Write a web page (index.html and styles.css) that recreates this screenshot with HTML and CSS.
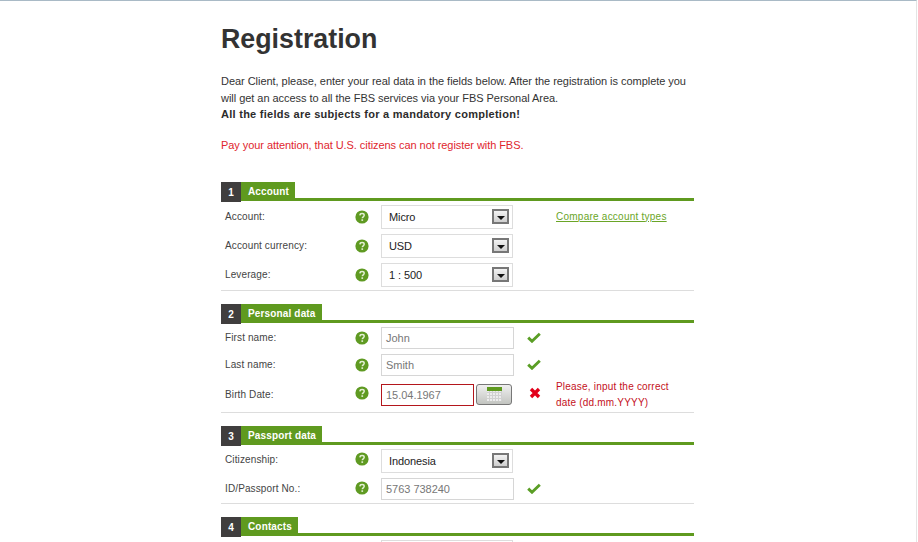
FILE: index.html
```html
<!DOCTYPE html>
<html lang="en">
<head>
<meta charset="utf-8">
<title>Registration</title>
<link rel="stylesheet" href="styles.css">
</head>
<body>
<svg class="sprites" width="0" height="0" aria-hidden="true">
  <symbol id="help" viewBox="0 0 14 14">
    <circle cx="7" cy="7" r="6.6" fill="#5f9a22"/>
    <path d="M4.9 5.4C5 4.2 5.9 3.6 7.1 3.6c1.3 0 2.1.7 2.1 1.7 0 1.5-1.9 1.6-1.9 3" fill="none" stroke="#e4efd4" stroke-width="1.5"/>
    <rect x="6.4" y="9.3" width="1.7" height="1.6" fill="#e4efd4"/>
  </symbol>
  <symbol id="ok" viewBox="0 0 14 11">
    <path d="M1.2 5.6l3.8 3.6 7.8-7.4" fill="none" stroke="#5a9e25" stroke-width="2.9"/>
  </symbol>
  <symbol id="bad" viewBox="0 0 12 12">
    <path d="M2 2l8 8M10 2l-8 8" fill="none" stroke="#e2001a" stroke-width="3.4"/>
  </symbol>
</svg>
<main class="page">
  <h1 class="title">Registration</h1>
  <p class="intro">Dear Client, please, enter your real data in the fields below. After the registration is complete you will get an access to all the FBS services via your FBS Personal Area.<br><strong class="intro-strong">All the fields are subjects for a mandatory completion!</strong></p>
  <p class="warning">Pay your attention, that U.S. citizens can not register with FBS.</p>

  <section class="group">
    <header class="group-head"><span class="group-num">1</span><h2 class="group-name">Account</h2><span class="group-rule"></span></header>
    <div class="rows rows-account">
      <div class="row">
        <span class="label">Account:</span><svg class="help"><use href="#help"/></svg>
        <div class="select"><span>Micro</span><span class="arrow"></span></div><span></span>
        <a class="link" href="#">Compare account types</a>
      </div>
      <div class="row">
        <span class="label">Account currency:</span><svg class="help"><use href="#help"/></svg>
        <div class="select"><span>USD</span><span class="arrow"></span></div>
      </div>
      <div class="row">
        <span class="label">Leverage:</span><svg class="help"><use href="#help"/></svg>
        <div class="select"><span>1 : 500</span><span class="arrow"></span></div>
      </div>
    </div>
  </section>

  <section class="group">
    <header class="group-head"><span class="group-num">2</span><h2 class="group-name">Personal data</h2><span class="group-rule"></span></header>
    <div class="rows rows-personal">
      <div class="row">
        <span class="label">First name:</span><svg class="help"><use href="#help"/></svg>
        <div class="input">John</div><svg class="ok"><use href="#ok"/></svg>
      </div>
      <div class="row">
        <span class="label">Last name:</span><svg class="help"><use href="#help"/></svg>
        <div class="input">Smith</div><svg class="ok"><use href="#ok"/></svg>
      </div>
      <div class="row row-tall">
        <span class="label">Birth Date:</span><svg class="help help-up"><use href="#help"/></svg>
        <div class="date">
          <div class="input input-error">15.04.1967</div>
          <button class="cal" type="button" aria-label="Calendar"><span class="cal-icon"></span></button>
        </div>
        <svg class="bad"><use href="#bad"/></svg>
        <span class="message">Please, input the correct date (dd.mm.YYYY)</span>
      </div>
    </div>
  </section>

  <section class="group">
    <header class="group-head"><span class="group-num">3</span><h2 class="group-name">Passport data</h2><span class="group-rule"></span></header>
    <div class="rows rows-passport">
      <div class="row">
        <span class="label label-up">Citizenship:</span><svg class="help help-up"><use href="#help"/></svg>
        <div class="select"><span>Indonesia</span><span class="arrow"></span></div>
      </div>
      <div class="row">
        <span class="label">ID/Passport No.:</span><svg class="help help-up-small"><use href="#help"/></svg>
        <div class="input">5763 738240</div><svg class="ok"><use href="#ok"/></svg>
      </div>
    </div>
  </section>

  <section class="group">
    <header class="group-head"><span class="group-num">4</span><h2 class="group-name">Contacts</h2><span class="group-rule"></span></header>
    <div class="rows">
      <div class="row"><span></span><span></span><div class="select"></div></div>
    </div>
  </section>
</main>
</body>
</html>
```
FILE: styles.css
```css
html, body {
  margin: 0;
  height: 542px;
  overflow: hidden;
  background: #fff;
}
body {
  box-sizing: border-box;
  width: 917px;
  border-top: 1px solid #a9bac6;
  border-right: 1px solid #e4e4e4;
  font-family: "Liberation Sans", Arial, sans-serif;
  color: #333;
}
.sprites { display: block; }
.page {
  width: 473px;
  margin-left: 221px;
}
.title {
  margin: 0;
  padding-top: 21px;
  font-size: 26.8px;
  line-height: 35px;
  font-weight: bold;
  color: #333;
}
.intro {
  margin: 16px 0 0;
  width: 470px;
  font-size: 11px;
  line-height: 16.5px;
  letter-spacing: -0.04px;
  color: #333;
}
.intro-strong { letter-spacing: 0.27px; color: #2c2c2c; }
.warning {
  margin: 14px 0 0;
  font-size: 11px;
  line-height: 16px;
  letter-spacing: -0.06px;
  color: #e0262e;
}
.group { margin-top: 13px; }
.warning + .group { margin-top: 29px; }
.group-head {
  display: flex;
  height: 20px;
}
.group-num {
  width: 20px;
  background: #403e3e;
  color: #fff;
  font-size: 10px;
  font-weight: bold;
  line-height: 22px;
  text-align: center;
}
.group-name {
  margin: 0;
  height: 19px;
  padding: 0 6px 0 7px;
  background: #5f9a1f;
  color: #fff;
  font-size: 10px;
  font-weight: bold;
  line-height: 20px;
  letter-spacing: 0.15px;
}
.group-rule {
  flex: 1;
  height: 16px;
  border-bottom: 3px solid #5f9a1f;
}
.rows {
  display: flex;
  flex-direction: column;
  gap: 5px;
  padding-top: 3px;
  border-bottom: 1px solid #ddd;
}
.rows-account { padding-bottom: 3px; }
.rows-personal { padding-bottom: 1px; }
.rows-passport { padding-bottom: 3px; }
.row {
  display: grid;
  grid-template-columns: 134px 26px 146px 29px 1fr;
  align-items: center;
}
.row-tall { margin-top: -2px; }
.label {
  padding-left: 4px;
  margin-bottom: 1px;
  font-size: 10px;
  letter-spacing: 0.12px;
  color: #444;
}
.label-up { margin-bottom: 3px; }
.help { width: 14px; height: 14px; }
.help-up { margin-bottom: 4px; }
.help-up-small { margin-bottom: 2px; }
.select {
  box-sizing: border-box;
  display: flex;
  align-items: center;
  justify-content: space-between;
  width: 132px;
  height: 24px;
  padding: 0 3px 0 7px;
  border: 1px solid #ddd;
  font-size: 11px;
  letter-spacing: -0.1px;
  color: #222;
}
.arrow {
  box-sizing: border-box;
  display: flex;
  align-items: flex-end;
  justify-content: center;
  width: 17px;
  height: 15px;
  padding-bottom: 2px;
  border: 2px solid #777;
  background: linear-gradient(#f2f2f2, #cfcfcf);
}
.arrow::after {
  content: "";
  border: 4px solid transparent;
  border-top-color: #111;
  border-bottom-width: 0;
}
.input {
  box-sizing: border-box;
  width: 133px;
  height: 22px;
  padding-left: 4px;
  border: 1px solid #d6d6d6;
  font-size: 11px;
  line-height: 20px;
  letter-spacing: -0.03px;
  color: #777;
}
.date { display: flex; gap: 2px; }
.input-error {
  width: 93px;
  border-color: #b4161c;
}
.cal {
  display: flex;
  align-items: center;
  justify-content: center;
  width: 36px;
  height: 21px;
  padding: 0;
  border: 1px solid #777;
  border-radius: 3px;
  background: linear-gradient(#f0f0f0, #c2c4c0);
}
.cal-icon {
  width: 15px;
  height: 14px;
  background:
    linear-gradient(#5f9a1f, #5f9a1f) top / 100% 4px no-repeat,
    repeating-linear-gradient(90deg, transparent 0 2px, #d0d0d0 2px 3px),
    repeating-linear-gradient(#ececec 0 2px, #d0d0d0 2px 3px);
}
.ok { width: 14px; height: 11px; margin-bottom: 1px; }
.bad { width: 12px; height: 12px; margin-left: 2px; margin-bottom: 4px; }
.link {
  font-size: 10px;
  letter-spacing: 0.24px;
  color: #6aa527;
  margin-bottom: 1px;
}
.message {
  width: 125px;
  font-size: 10px;
  line-height: 16px;
  letter-spacing: 0.2px;
  color: #c4101c;
}
```
